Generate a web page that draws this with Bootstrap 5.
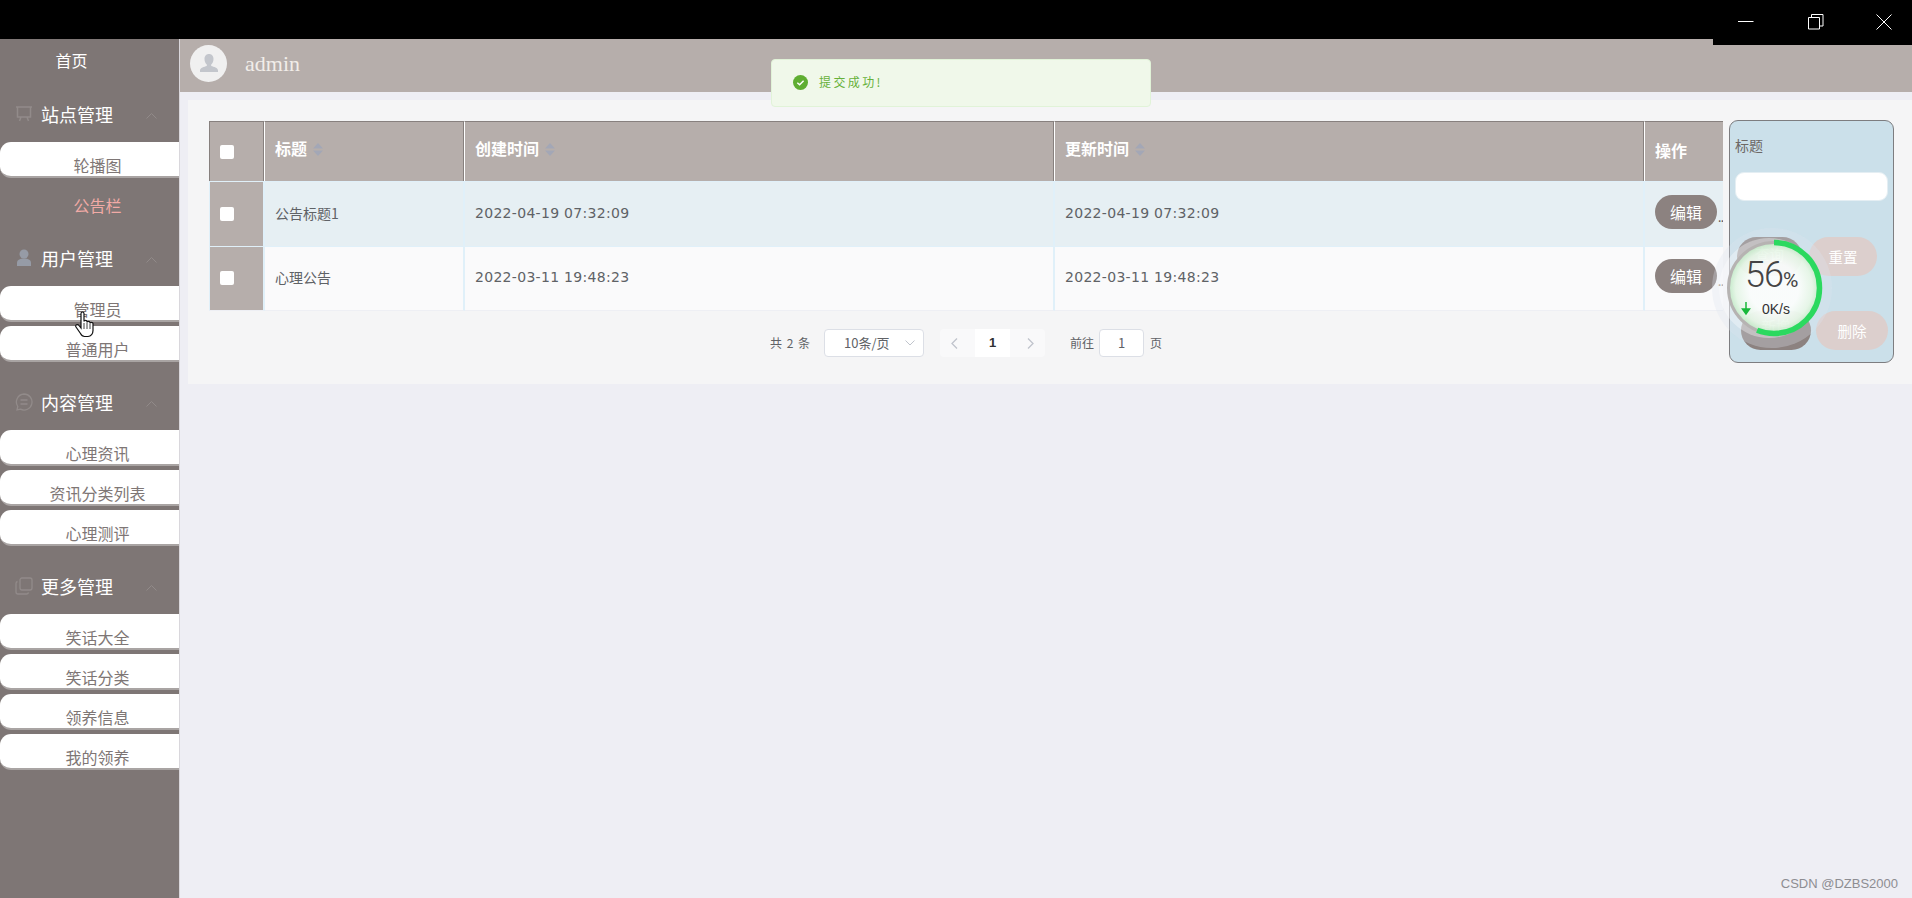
<!DOCTYPE html>
<html lang="zh">
<head>
<meta charset="utf-8">
<title>公告栏</title>
<link href="https://cdn.jsdelivr.net/npm/bootstrap@5.3.0/dist/css/bootstrap.min.css" rel="stylesheet">
<style>
html,body{height:100%;overflow:hidden}
body{font-family:"Noto Sans CJK SC","Liberation Sans",sans-serif;background:#eeeef4;font-size:14px;color:#606266;position:relative}
.win-bar{height:39px;background:#000;position:relative}
.win-notch{position:absolute;right:0;top:0;width:199px;height:45px;background:#000;z-index:5}
.win-ic{position:absolute;top:14px;width:16px;height:16px}
.ic-min{left:25px}.ic-max{left:95px}.ic-close{left:163px}
.shell{height:859px}
.side-nav{width:180px;flex:none;background:#7e7675;border-right:1px solid #d9d7dc}
.home-link{height:47px;padding-top:7px;width:143px;text-align:center;color:#fff;font-size:16px;line-height:28px}
.grp-head{height:56px;margin-top:12px;padding-left:15px;color:#fff;font-size:18px}
.grp-first{margin-top:0}
.grp-ic{width:18px;height:18px;margin-right:8px;flex:none}
.grp-arrow{width:11px;height:7px;margin-left:33px;margin-top:3px}
.sub-link{height:36px;margin-bottom:4px;padding-top:12px;padding-left:16px;line-height:22px;background:#fff;color:#7e7675;font-size:16px;text-align:center;border-radius:11px 0 0 11px;border-bottom:2px solid #a9a4a3;overflow:hidden}
.sub-active{background:transparent;border-bottom-color:transparent;color:#f1aaa6}
.sub-last{margin-bottom:0}
.main-col{min-width:0}
.top-head{height:53px;background:#b6aeab;padding-left:10px}
.avatar-dot{width:37px;height:37px;border-radius:50%;background:#f0f0f0;margin-right:18px;margin-top:-5px}
.admin-name{font-family:"Liberation Serif",serif;font-size:22px;color:#f1ede9;line-height:26px;margin-top:-4px}
.content-box{margin:8px 0 0 8px;background:#f5f5f6;height:284px;padding:21px 19px 0 21px}
.data-tbl{table-layout:fixed;width:1514px;border-collapse:separate;border-spacing:0}
.c-check{width:56px}.c-title{width:200px}.c-time{width:590px}.c-ops{width:78px}
.data-tbl th{height:60px;background:#b6aeab;color:#fff;font-size:16px;font-weight:700;border-top:1px solid #87807e;border-right:1px solid #fff;box-shadow:inset -2px 0 0 -1px #87807e;padding:0 10px 8px;vertical-align:middle;white-space:nowrap}
.data-tbl th:first-child{border-left:1px solid #87807e}
.data-tbl th:last-child{border-right:0;box-shadow:none;padding-top:0;padding-bottom:3px}
.data-tbl td{height:65px;padding:0 10px 2px;vertical-align:middle;border-top:1px solid #e0f0f9;border-right:2px solid #e0f0f9;color:#5f6266;font-size:14px;white-space:nowrap;overflow:hidden}
.data-tbl td:last-child{border-right:0;padding-right:0;padding-bottom:5px}
.row-a td{background:#e6eff3}.row-b td{background:#fafafb;border-bottom:1px solid #eeeff4}
.data-tbl td.cell-check{background:#b6aeab;padding:0 0 4px 10px;border-left:1px solid #e0f0f9}
.data-tbl th.cell-check{padding:0 0 4px 10px}
.fake-box{display:inline-block;width:14px;height:14px;background:#fff;border-radius:2px;vertical-align:middle}
.data-tbl td.time-txt{font-family:"DejaVu Sans",sans-serif;font-size:14px;letter-spacing:.3px;padding-top:0}
.sort-ic{width:10px;height:15px;margin-left:6px;vertical-align:-2px}
.edit-btn{width:62px;height:34px;padding:0;background:#8c8280;border:0;border-radius:17px;color:#fff;font-size:16px;line-height:34px}
.more-dots{font-size:12px;color:#555;vertical-align:-3px;margin-left:1px;letter-spacing:-.5px}
.pager-bar{width:1514px;height:28px;margin-top:18px;font-size:12px;color:#606266}
.pg-total{letter-spacing:1px;margin-right:13px}
.pg-size{width:100px;height:28px;background:#fff;border:1px solid #dcdfe6;border-radius:4px;font-size:13px;margin-right:16px;padding:0 8px 0 19px}
.pg-arrow{width:35px;height:28px;background:#f9f9fa}
.pg-prev{border-radius:4px 0 0 4px;padding-right:6px}.pg-next{border-radius:0 4px 4px 0;margin-right:25px;padding-left:6px}
.pg-cur{width:35px;height:28px;background:#fff;color:#303133;font-weight:700;font-size:13px;text-align:center;line-height:28px;font-family:"Liberation Sans",sans-serif}
.pg-input{width:45px;height:28px;background:#fff;border:1px solid #dcdfe6;border-radius:4px;text-align:center;line-height:26px;font-size:13px;margin:0 6px 0 5px}
.query-panel{position:absolute;left:1729px;top:120px;width:165px;height:243px;background:#cbe0ea;border:1px solid #7d7d80;border-radius:9px;z-index:1;padding:0 5px}
.q-label{font-size:14px;color:#6d6866;line-height:20px;margin-top:14px}
.q-input{width:153px;height:29px;background:#fff;border-radius:9px;margin-top:17px;border:1px solid #e4eef3}
.q-row{display:flex}
.q-btn{height:39px;border:0;border-radius:20px;padding:0;color:#fff;font-size:14.5px;line-height:39px;text-align:center}
.q-dark{background:#8c8280}.q-pale{background:#dccfcd}
.q-r1{margin-top:36px;margin-left:2px;gap:7px}.q-r1 .q-dark{width:65px;line-height:34px}.q-r1 .q-pale{width:68px}
.q-r2{margin-top:35px;margin-left:6px;gap:5px}.q-r2 .q-dark{width:70px;line-height:30px}.q-r2 .q-pale{width:72px}
.toast-box{position:absolute;left:771px;top:59px;width:380px;height:48px;background:#f0f8ea;border:1px solid #e1f3d8;border-radius:4px;z-index:6;padding:0 0 2px 21px;color:#67b13a;font-size:12px;letter-spacing:2.4px}
.toast-ic{width:15px;height:15px;margin-right:11px}
.net-ball{position:absolute;left:1712px;top:228px;width:120px;height:120px;z-index:7}
.net-svg{position:absolute;left:0;top:0;width:120px;height:120px}
.net-pct{position:absolute;left:33px;top:26px;font-family:"Roboto",sans-serif;font-weight:300;font-size:36px;line-height:42px;color:#444;letter-spacing:-1px}
.net-pct small{font-size:21px;font-weight:400;letter-spacing:0}
.net-speed{position:absolute;left:50px;top:73px;font-family:"Liberation Sans",sans-serif;font-size:14px;line-height:16px;color:#333}
.hand-cursor{position:absolute;left:75px;top:311px;width:21px;height:27px;z-index:8}
.mark-txt{position:absolute;right:14px;bottom:6px;font-size:13px;line-height:16px;color:#8d8d92;font-family:"Liberation Sans","Noto Sans CJK SC",sans-serif;z-index:2}
</style>
</head>
<body>
<div class="win-bar">
  <div class="win-notch">
    <svg class="win-ic ic-min" viewBox="0 0 16 16"><path d="M0 7.500h15.500" stroke="#fff" fill="none"/></svg>
    <svg class="win-ic ic-max" viewBox="0 0 16 16"><path d="M3.500 3.500V.5h11.500v11.500h-3M.5 3.500h11v11.500h-11z" stroke="#fff" fill="none"/></svg>
    <svg class="win-ic ic-close" viewBox="0 0 16 16"><path d="M.5.5l15 15M15.500.5l-15 15" stroke="#fff" fill="none"/></svg>
  </div>
</div>
<div class="shell d-flex">
  <aside class="side-nav">
    <div class="home-link">首页</div>
    <div class="grp-head grp-first d-flex align-items-center">
      <svg class="grp-ic" viewBox="0 0 18 18" fill="none" stroke="#928b8a" stroke-width="1.500"><path d="M1 2h16M2.500 2v10h13V2M6 12l-1.500 4M12 12l1.500 4"/></svg>站点管理
      <svg class="grp-arrow" viewBox="0 0 11 7" fill="none" stroke="#918a89"><path d="M.5 6.500l5-5 5 5"/></svg>
    </div>
    <div class="sub-link">轮播图</div>
    <div class="sub-link sub-active sub-last">公告栏</div>
    <div class="grp-head d-flex align-items-center">
      <svg class="grp-ic" viewBox="0 0 18 18" fill="#969ba6"><circle cx="9" cy="5" r="4.500"/><path d="M2 17v-3c0-3 2.500-4.500 7-4.500s7 1.500 7 4.500v3z"/></svg>用户管理
      <svg class="grp-arrow" viewBox="0 0 11 7" fill="none" stroke="#918a89"><path d="M.5 6.500l5-5 5 5"/></svg>
    </div>
    <div class="sub-link">管理员</div>
    <div class="sub-link sub-last">普通用户</div>
    <div class="grp-head d-flex align-items-center">
      <svg class="grp-ic" viewBox="0 0 18 18" fill="none" stroke="#928b8a" stroke-width="1.300"><path d="M9 1a8 8 0 1 1-3.500 15.200L2 17l.8-3.500A8 8 0 0 1 9 1zM5.500 7h7M5.500 11h7"/></svg>内容管理
      <svg class="grp-arrow" viewBox="0 0 11 7" fill="none" stroke="#918a89"><path d="M.5 6.500l5-5 5 5"/></svg>
    </div>
    <div class="sub-link">心理资讯</div>
    <div class="sub-link">资讯分类列表</div>
    <div class="sub-link sub-last">心理测评</div>
    <div class="grp-head d-flex align-items-center">
      <svg class="grp-ic" viewBox="0 0 18 18" fill="none" stroke="#928b8a" stroke-width="1.300"><rect x="5" y="1" width="12" height="12" rx="2"/><path d="M2.500 4.500A2 2 0 0 0 1 6.500V15a2 2 0 0 0 2 2h8.500a2 2 0 0 0 2-1.500"/></svg>更多管理
      <svg class="grp-arrow" viewBox="0 0 11 7" fill="none" stroke="#918a89"><path d="M.5 6.500l5-5 5 5"/></svg>
    </div>
    <div class="sub-link">笑话大全</div>
    <div class="sub-link">笑话分类</div>
    <div class="sub-link">领养信息</div>
    <div class="sub-link">我的领养</div>
  </aside>
  <main class="main-col flex-grow-1">
    <header class="top-head d-flex align-items-center">
      <div class="avatar-dot d-flex align-items-center justify-content-center">
        <svg width="22" height="22" viewBox="0 0 22 22" fill="#c3c6cc"><path d="M11 2c3 0 4.500 2.300 4.500 5s-1.300 4.800-2.300 5.600v1.400c2.500 1 6.800 1.700 6.800 4.500v1.500H2v-1.500c0-2.800 4.300-3.500 6.800-4.500v-1.400C7.800 11.800 6.500 9.700 6.500 7S8 2 11 2z"/></svg>
      </div>
      <span class="admin-name">admin</span>
    </header>
    <section class="content-box">
      <table class="data-tbl">
        <colgroup><col class="c-check"><col class="c-title"><col class="c-time"><col class="c-time"><col class="c-ops"></colgroup>
        <thead>
          <tr>
            <th class="cell-check"><span class="fake-box"></span></th>
            <th>标题<svg class="sort-ic" viewBox="0 0 10 15" fill="#a3a7b6"><path d="M5 1l5 5.500H0zM5 14L0 8.500h10z"/></svg></th>
            <th>创建时间<svg class="sort-ic" viewBox="0 0 10 15" fill="#a3a7b6"><path d="M5 1l5 5.500H0zM5 14L0 8.500h10z"/></svg></th>
            <th>更新时间<svg class="sort-ic" viewBox="0 0 10 15" fill="#a3a7b6"><path d="M5 1l5 5.500H0zM5 14L0 8.500h10z"/></svg></th>
            <th>操作</th>
          </tr>
        </thead>
        <tbody>
          <tr class="row-a">
            <td class="cell-check"><span class="fake-box"></span></td>
            <td>公告标题1</td>
            <td class="time-txt">2022-04-19 07:32:09</td>
            <td class="time-txt">2022-04-19 07:32:09</td>
            <td><button class="edit-btn" type="button">编辑</button><span class="more-dots">..</span></td>
          </tr>
          <tr class="row-b">
            <td class="cell-check"><span class="fake-box"></span></td>
            <td>心理公告</td>
            <td class="time-txt">2022-03-11 19:48:23</td>
            <td class="time-txt">2022-03-11 19:48:23</td>
            <td><button class="edit-btn" type="button">编辑</button><span class="more-dots">..</span></td>
          </tr>
        </tbody>
      </table>
      <div class="pager-bar d-flex align-items-center justify-content-center">
        <span class="pg-total">共 2 条</span>
        <div class="pg-size d-flex align-items-center justify-content-between"><span>10条/页</span><svg width="10" height="6" viewBox="0 0 10 6" fill="none" stroke="#c0c4cc"><path d="M.5.500l4.500 4.500 4.500-4.500"/></svg></div>
        <div class="pg-arrow pg-prev d-flex align-items-center justify-content-center"><svg width="7" height="11" viewBox="0 0 7 11" fill="none" stroke="#c0c4cc" stroke-width="1.300"><path d="M6 .5l-5 5 5 5"/></svg></div>
        <div class="pg-cur">1</div>
        <div class="pg-arrow pg-next d-flex align-items-center justify-content-center"><svg width="7" height="11" viewBox="0 0 7 11" fill="none" stroke="#c0c4cc" stroke-width="1.300"><path d="M1 .5l5 5-5 5"/></svg></div>
        <span>前往</span><div class="pg-input">1</div><span>页</span>
      </div>
    </section>
  </main>
</div>

<div class="toast-box d-flex align-items-center">
  <svg class="toast-ic" viewBox="0 0 15 15"><circle cx="7.500" cy="7.500" r="7.500" fill="#5fae32"/><path d="M4.300 7.800l2.300 2 4-4" fill="none" stroke="#fff" stroke-width="1.500"/></svg>提交成功!
</div>

<div class="query-panel">
  <div class="q-label">标题</div>
  <div class="q-input"></div>
  <div class="q-row q-r1"><div class="q-btn q-dark">查询</div><div class="q-btn q-pale">重置</div></div>
  <div class="q-row q-r2"><div class="q-btn q-dark">新增</div><div class="q-btn q-pale">删除</div></div>
</div>

<div class="net-ball">
  <svg class="net-svg" viewBox="0 0 120 120">
    <defs><radialGradient id="ballFill" cx="50%" cy="50%" r="50%"><stop offset="55%" stop-color="#fbfdfc"/><stop offset="85%" stop-color="#e6f6e6"/><stop offset="100%" stop-color="#c4eac8"/></radialGradient></defs>
    <circle cx="60" cy="60" r="60" fill="#dfe6ee" opacity=".3"/>
    <circle cx="57" cy="60" r="50" fill="#fff" opacity=".35"/>
    <circle cx="62" cy="60" r="45" fill="url(#ballFill)" opacity=".93"/>
    <circle cx="62" cy="60" r="45.500" fill="none" stroke="#b6b3b2" stroke-width="3"/>
    <circle cx="62" cy="60" r="45.500" fill="none" stroke="#2bd95f" stroke-width="5.500" stroke-dasharray="160 286" transform="rotate(-90 62 60)"/>
    <path d="M34 74v9M30.500 81l3.500 5 3.500-5z" fill="#18b83a" stroke="#18b83a" stroke-width="1.500"/>
  </svg>
  <div class="net-pct">56<small>%</small></div>
  <div class="net-speed">0K/s</div>
</div>

<svg class="hand-cursor" viewBox="0 0 21 27"><path d="M6 2.500c0-2 3-2 3 0v8c0-1.500 3-1.500 3 0v1c0-1.500 3-1.500 3 0v1c0-1.500 3-1.500 3 0v7c0 3-2 6-5 6H9.500c-2 0-3-1-4-3L1 16c-1-2 1.500-3.500 3-1.500l2 2.500z" fill="#fff" stroke="#111" stroke-width="1.200"/><path d="M9 12v6M12 12v6M15 13v5" stroke="#111" stroke-width=".8" fill="none"/></svg>

<div class="mark-txt">CSDN @DZBS2000</div>
</body>
</html>
